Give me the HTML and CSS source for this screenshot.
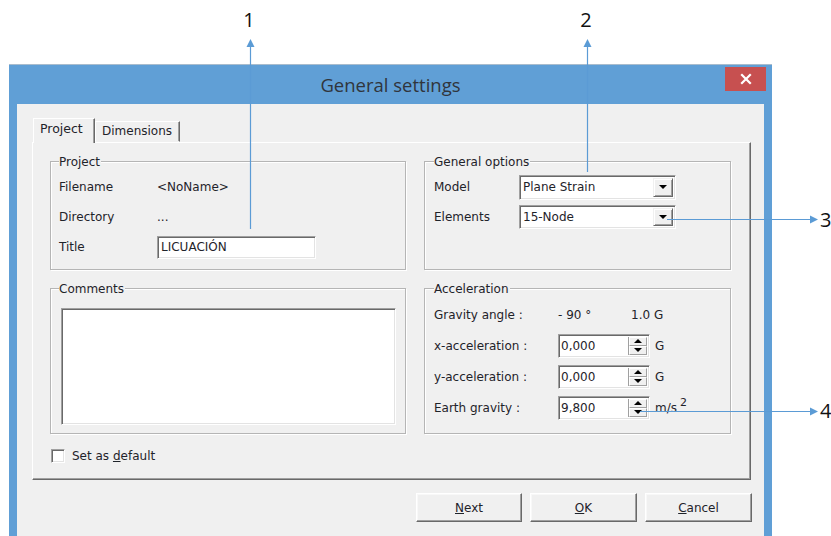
FILE: index.html
```html
<!DOCTYPE html>
<html lang="en">
<head>
<meta charset="utf-8">
<title>General settings</title>
<link rel="stylesheet" href="styles.css">
</head>
<body>
<div class="window">
  <div class="titlebar">
    <span class="caption">General settings</span>
    <button class="close" aria-label="Close">
      <svg width="12" height="12" viewBox="0 0 12 12"><path d="M2 2 L10 10 M10 2 L2 10" stroke="#fff" stroke-width="2.2" stroke-linecap="square"/></svg>
    </button>
  </div>
  <div class="client">
    <div class="tabs">
      <div class="tab active">Project</div>
      <div class="tab">Dimensions</div>
    </div>
    <div class="panel">
      <div class="groups">
        <div class="group">
          <div class="legend">Project</div>
          <div class="form form-project">
            <span>Filename</span><span>&lt;NoName&gt;</span>
            <span>Directory</span><span>...</span>
            <span>Title</span><div class="textbox">LICUACIÓN</div>
          </div>
        </div>
        <div class="group group-right">
          <div class="legend">General options</div>
          <div class="form form-options">
            <span>Model</span>
            <div class="combo combo-tall"><span class="combo-value">Plane Strain</span><span class="combo-btn"><i class="tri-down"></i></span></div>
            <span>Elements</span>
            <div class="combo"><span class="combo-value">15-Node</span><span class="combo-btn"><i class="tri-down"></i></span></div>
          </div>
        </div>
        <div class="group">
          <div class="legend">Comments</div>
          <div class="memo"></div>
        </div>
        <div class="group group-right">
          <div class="legend">Acceleration</div>
          <div class="form form-accel">
            <span>Gravity angle :</span>
            <div class="pair"><span class="angle">- 90 °</span><span>1.0 G</span></div>
            <span>x-acceleration :</span>
            <div class="pair"><div class="spin"><span class="spin-value">0,000</span><span class="spin-btns"><span class="spin-btn"><i class="tri-up"></i></span><span class="spin-btn"><i class="tri-down"></i></span></span></div><span class="unit">G</span></div>
            <span>y-acceleration :</span>
            <div class="pair"><div class="spin"><span class="spin-value">0,000</span><span class="spin-btns"><span class="spin-btn"><i class="tri-up"></i></span><span class="spin-btn"><i class="tri-down"></i></span></span></div><span class="unit">G</span></div>
            <span>Earth gravity :</span>
            <div class="pair"><div class="spin"><span class="spin-value">9,800</span><span class="spin-btns"><span class="spin-btn"><i class="tri-up"></i></span><span class="spin-btn"><i class="tri-down"></i></span></span></div><span class="unit">m/s<sup>2</sup></span></div>
          </div>
        </div>
      </div>
      <label class="check"><span class="checkbox"></span><span>Set as <u>d</u>efault</span></label>
    </div>
    <div class="footer">
      <button class="btn"><u>N</u>ext</button>
      <button class="btn"><u>O</u>K</button>
      <button class="btn"><u>C</u>ancel</button>
    </div>
  </div>
</div>

<svg class="callouts" width="831" height="536" viewBox="0 0 831 536">
  <g stroke="#5b9bd5" stroke-width="1.2" fill="none">
    <line x1="250.5" y1="229" x2="250.5" y2="46"/>
    <line x1="587.5" y1="172" x2="587.5" y2="46"/>
    <line x1="667" y1="219.5" x2="810" y2="219.5"/>
    <line x1="640" y1="411.5" x2="810" y2="411.5"/>
  </g>
  <g fill="#5b9bd5">
    <polygon points="250.5,39 246.5,47 254.5,47"/>
    <polygon points="587.5,39 583.5,47 591.5,47"/>
    <polygon points="818,219.5 810,215.5 810,223.5"/>
    <polygon points="818,411.5 810,407.5 810,415.5"/>
  </g>
  <g class="callout-num">
    <text x="249" y="27" text-anchor="middle">1</text>
    <text x="586" y="27" text-anchor="middle">2</text>
    <text x="820" y="227">3</text>
    <text x="820" y="418">4</text>
  </g>
</svg>
</body>
</html>
```
FILE: styles.css
```css
* { box-sizing: border-box; }

html, body { margin: 0; }

body {
  width: 831px;
  height: 536px;
  overflow: hidden;
  position: relative;
  background: #ffffff;
  font-family: "DejaVu Sans", sans-serif;
  font-size: 12px;
  color: #1f232a;
}

/* ---- window frame ---- */
.window {
  margin: 64px 0 0 9px;
  width: 763px;
  background: #609fd6;
  border-top: 1px solid #a9bccd;
  padding: 0 8px 8px;
}

.titlebar {
  height: 39px;
  display: flex;
  align-items: center;
  justify-content: center;
  position: relative;
  font-family: "Open Sans", "Noto Sans", sans-serif;
  font-size: 18.5px;
  color: #30353c;
}

.close {
  position: absolute;
  top: 2px;
  right: -2px;
  width: 41px;
  height: 24px;
  border: 0;
  padding: 0;
  background: #c75050;
  display: flex;
  align-items: center;
  justify-content: center;
}

.client {
  background: #f0f0f0;
  height: 432px;
  padding: 14px 14px 0 15px;
}

/* ---- tabs ---- */
.tabs {
  display: flex;
  align-items: flex-end;
  height: 24px;
  position: relative;
  z-index: 1;
}

.tab {
  width: 85px;
  height: 21px;
  padding: 0 0 0 6px;
  line-height: 19px;
  border: 1px solid;
  border-color: #ffffff #696969 transparent #ffffff;
  box-shadow: inset -1px 0 0 #a0a0a0;
  background: #f0f0f0;
}

.tab.active {
  width: 62px;
  height: 25px;
  margin: 0 0 -1px 1px;
  padding: 0 0 0 6px;
  line-height: 20px;
  font-size: 12.5px;
  border-bottom: 0;
}

.panel {
  width: 719px;
  height: 338px;
  border: 1px solid;
  border-color: #ffffff #696969 #696969 #ffffff;
  box-shadow: inset -1px -1px 0 #a0a0a0;
  padding: 18px 18px 0 17px;
}

/* ---- group boxes ---- */
.groups {
  display: grid;
  grid-template-columns: 356px 307px;
  grid-template-rows: 109px 146px;
  column-gap: 18px;
  row-gap: 18px;
}

.group {
  border: 1px solid #b5b5b5;
  box-shadow: inset 1px 1px 0 #ffffff, 1px 1px 0 #ffffff;
  padding: 0 0 0 8px;
}

.group-right { padding-left: 9px; }

.legend {
  display: block;
  width: fit-content;
  margin-top: -7px;
  line-height: 14px;
  background: #f0f0f0;
  padding: 0 1px 0 0;
}

.form {
  display: grid;
  grid-auto-rows: 30px;
  align-items: center;
  margin-top: 3px;
}

.form-project { grid-template-columns: 98px 1fr; }
.form-options { grid-template-columns: 85px 1fr; }
.form-accel { grid-template-columns: 124px 1fr; grid-auto-rows: 31px; }

/* sunken 3D edge used by edit fields */
.textbox, .combo, .spin, .memo, .checkbox {
  background: #ffffff;
  border: 1px solid;
  border-color: #a0a0a0 #ffffff #ffffff #a0a0a0;
  box-shadow: inset 1px 1px 0 #696969, inset -1px -1px 0 #e3e3e3;
}

.textbox {
  width: 159px;
  height: 23px;
  padding: 0 3px;
  line-height: 21px;
}

.combo {
  width: 157px;
  height: 24px;
  display: flex;
  align-items: stretch;
  padding: 2px;
}

.combo-tall { height: 25px; }

.combo-value {
  flex: 1;
  padding-left: 1px;
  line-height: 19px;
}

.combo-btn {
  width: 20px;
  background: #f0f0f0;
  border: 1px solid;
  border-color: #f0f0f0 #696969 #696969 #f0f0f0;
  box-shadow: inset 1px 1px 0 #ffffff, inset -1px -1px 0 #a0a0a0;
  display: flex;
  align-items: center;
  justify-content: center;
}

.tri-down {
  width: 0;
  height: 0;
  border-left: 4px solid transparent;
  border-right: 4px solid transparent;
  border-top: 4px solid #000;
}

.tri-up {
  width: 0;
  height: 0;
  border-left: 4px solid transparent;
  border-right: 4px solid transparent;
  border-bottom: 4px solid #000;
}

.memo {
  width: 335px;
  height: 117px;
  margin: 12px 0 0 2px;
}

/* ---- acceleration rows ---- */
.pair {
  display: flex;
  align-items: center;
}

.angle { width: 73px; }

.spin {
  width: 92px;
  height: 24px;
  display: flex;
  padding: 2px;
}

.spin-value {
  flex: 1;
  line-height: 18px;
}

.spin-btns {
  width: 19px;
  display: flex;
  flex-direction: column;
  border-left: 1px solid #a0a0a0;
}

.spin-btn {
  flex: 1;
  background: #f0f0f0;
  border: 1px solid;
  border-color: #ffffff #a0a0a0 #a0a0a0 #ffffff;
  display: flex;
  align-items: center;
  justify-content: center;
}

.unit { margin-left: 5px; }

.unit sup {
  font-size: 11px;
  margin-left: 3px;
  vertical-align: 6px;
  line-height: 0;
}

/* ---- checkbox ---- */
.check {
  display: flex;
  align-items: center;
  gap: 7px;
  margin: 15px 0 0 1px;
  height: 14px;
}

.checkbox {
  width: 14px;
  height: 14px;
}

/* ---- dialog buttons ---- */
.footer {
  display: flex;
  justify-content: flex-end;
  gap: 8px;
  margin: 13px -2px 0 0;
}

.btn {
  width: 107px;
  height: 29px;
  font: inherit;
  color: inherit;
  background: #f0f0f0;
  border: 1px solid;
  border-color: #ffffff #696969 #696969 #ffffff;
  box-shadow: inset -1px -1px 0 #a0a0a0, inset 1px 1px 0 #f8f8f8;
  padding: 0;
}

.btn:first-child { width: 106px; }

/* ---- callout overlay ---- */
.callouts {
  position: absolute;
  top: 0;
  left: 0;
  pointer-events: none;
}

.callout-num text {
  font-family: "Open Sans", "Noto Sans", sans-serif;
  font-size: 20px;
  fill: #111111;
}
```
